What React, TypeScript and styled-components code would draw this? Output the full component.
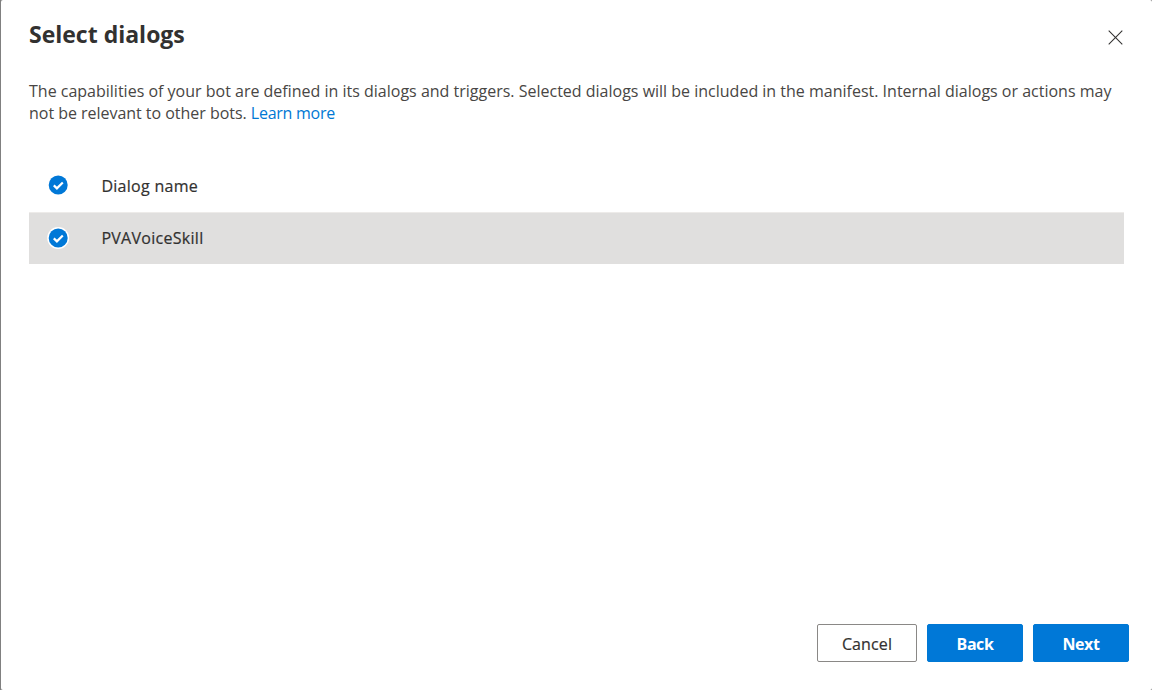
import React from 'react';
import styled, { createGlobalStyle } from 'styled-components';

const GlobalStyle = createGlobalStyle`
  * { box-sizing: border-box; }
  body {
    margin: 0;
    background: #808080;
    color: #323130;
    font-family: 'Segoe UI', 'Open Sans', 'Noto Sans', sans-serif;
  }
`;

const Dialog = styled.main`
  display: flex;
  flex-direction: column;
  height: 690px;
  margin-left: 1px;
  padding: 19px 23px 28px 28px;
  background: #fff;
  border-radius: 2px;
`;

const Header = styled.header`
  display: flex;
  justify-content: space-between;
  height: 61px;
`;

const Title = styled.h1`
  margin: 0;
  font-size: 23px;
  line-height: 30px;
  font-weight: 700;
`;

const CloseButton = styled.button`
  display: flex;
  width: 16px;
  height: 16px;
  margin: 10px 6px 0 0;
  padding: 0;
  border: 0;
  background: none;
`;

const Description = styled.p`
  margin: 0 0 35px;
  color: #484644;
  font-size: 16px;
  font-weight: 400;
  line-height: 22px;
  white-space: nowrap;
`;

const Line = styled.span<{ $spacing: number }>`
  display: block;
  letter-spacing: ${(p) => p.$spacing}px;
`;

const Link = styled.a`
  color: #0078d4;
  letter-spacing: -0.25px;
  text-decoration: none;
`;

const List = styled.div`
  width: 1095px;
`;

const Row = styled.div<{ $selected?: boolean }>`
  display: flex;
  align-items: center;
  height: ${(p) => (p.$selected ? 52 : 53)}px;
  padding: 0 0 ${(p) => (p.$selected ? 2 : 1)}px 18px;
  background: ${(p) => (p.$selected ? '#e0dfde' : '#fff')};
  border-top: ${(p) => (p.$selected ? '1px solid #edebe9' : '0')};
`;

const RowLabel = styled.span<{ $header?: boolean }>`
  margin-left: 32.4px;
  padding-top: ${(p) => (p.$header ? 2 : 0)}px;
  font-size: 16px;
  line-height: 22px;
  letter-spacing: 0.28px;
  -webkit-text-stroke: 0.2px currentColor;
`;

const Footer = styled.footer`
  display: flex;
  justify-content: flex-end;
  gap: 10px;
  margin-top: auto;
`;

const Button = styled.button<{ $primary?: boolean }>`
  width: ${(p) => (p.$primary ? 96 : 100)}px;
  height: 38px;
  padding: 2px 0 0;
  border: 1px solid ${(p) => (p.$primary ? '#0078d4' : '#8a8886')};
  border-radius: 2px;
  background: ${(p) => (p.$primary ? '#0078d7' : '#fff')};
  color: ${(p) => (p.$primary ? '#fff' : '#323130')};
  font-family: inherit;
  font-size: 16px;
  font-weight: ${(p) => (p.$primary ? 700 : 400)};
  letter-spacing: ${(p) => (p.$primary ? -0.45 : 0.12)}px;
  -webkit-text-stroke: ${(p) => (p.$primary ? 0 : 0.2)}px currentColor;
`;

const CheckCircle = () => (
  <svg width="22" height="22" viewBox="0 0 22 22">
    <circle cx="11.2" cy="11" r="11" fill="#fff" />
    <circle cx="11.2" cy="11" r="9.5" fill="#0078d7" />
    <path d="M6.8 11.4 9.9 14.4 15.8 8.5" fill="none" stroke="#fff" strokeWidth="2.2" />
  </svg>
);

export default function App() {
  return (
    <>
      <GlobalStyle />
      <Dialog>
        <Header>
          <Title>Select dialogs</Title>
          <CloseButton aria-label="Close">
            <svg width="16" height="16" viewBox="0 0 16 16">
              <path d="M1.7 1.7 15.3 15.3M15.3 1.7 1.7 15.3" stroke="#323130" strokeWidth="1.05" />
            </svg>
          </CloseButton>
        </Header>
        <Description>
          <Line $spacing={0}>
            The capabilities of your bot are defined in its dialogs and triggers. Selected dialogs will be included in the manifest. Internal dialogs or actions may
          </Line>
          <Line $spacing={-0.03}>
            not be relevant to other bots. <Link>Learn more</Link>
          </Line>
        </Description>
        <List>
          <Row>
            <CheckCircle />
            <RowLabel $header>Dialog name</RowLabel>
          </Row>
          <Row $selected>
            <CheckCircle />
            <RowLabel>PVAVoiceSkill</RowLabel>
          </Row>
        </List>
        <Footer>
          <Button>Cancel</Button>
          <Button $primary>Back</Button>
          <Button $primary>Next</Button>
        </Footer>
      </Dialog>
    </>
  );
}
